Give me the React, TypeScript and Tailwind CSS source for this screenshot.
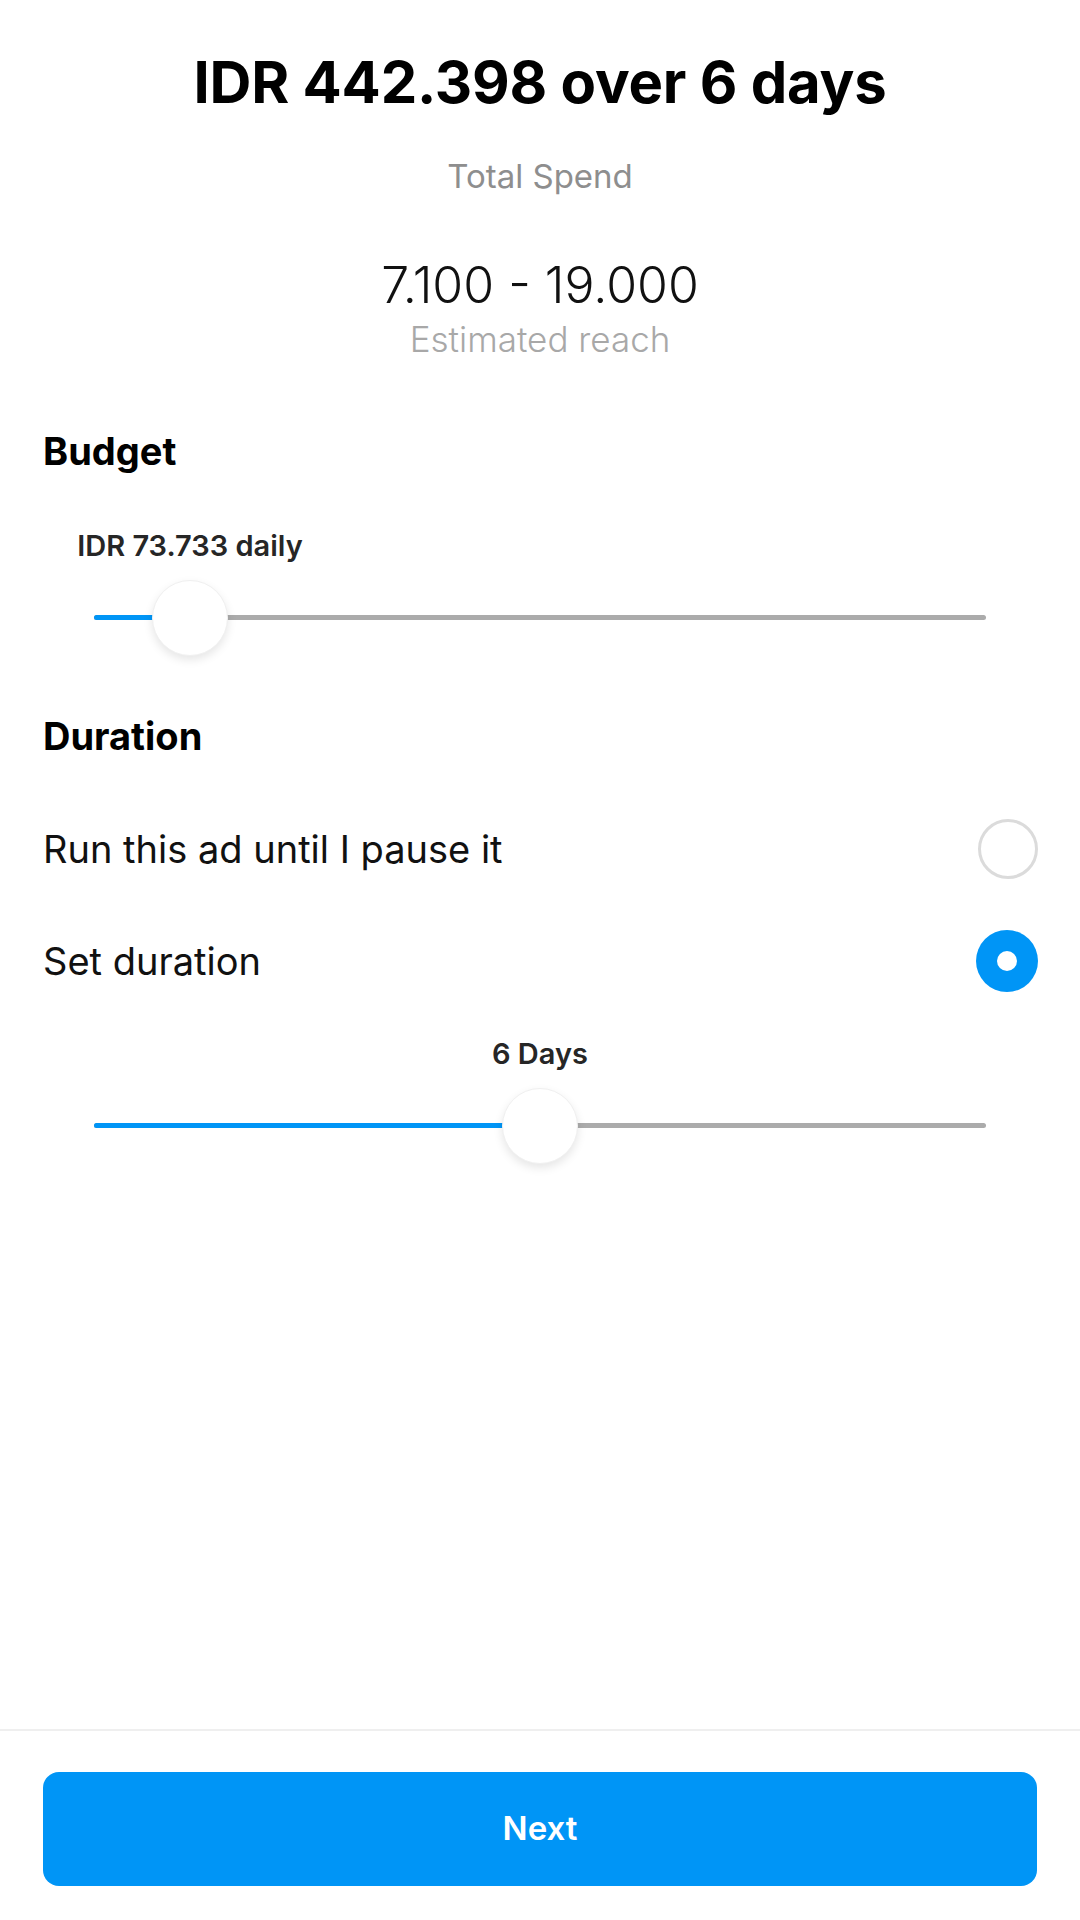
import React from "react";

function Slider({ pct, label }: { pct: number; label: string }) {
  return (
    <div className="px-[94px]">
      <div className="relative h-[32px]">
        <div
          className="absolute top-0 -translate-x-1/2 whitespace-nowrap text-[29px] leading-[32px] font-semibold text-[#262626]"
          style={{ left: `${pct * 100}%` }}
        >
          {label}
        </div>
      </div>
      <div className="relative mt-[17px] h-[78px]">
        <div className="absolute left-0 right-0 top-[36px] h-[5px] rounded-full bg-[#ababab]" />
        <div
          className="absolute left-0 top-[36px] h-[5px] rounded-full bg-[#0095f6]"
          style={{ width: `${pct * 100}%` }}
        />
        <div
          className="absolute top-[1px] h-[76px] w-[76px] -translate-x-1/2 rounded-full border border-[#f0f0f0] bg-white shadow-[0_4px_10px_rgba(0,0,0,0.10)]"
          style={{ left: `${pct * 100}%` }}
        />
      </div>
    </div>
  );
}

export default function App() {
  return (
    <div
      className="flex min-h-[1920px] w-[1080px] flex-col bg-white text-black"
      style={{ fontFamily: "Inter, 'Noto Sans', sans-serif" }}
    >
      <div className="flex flex-1 flex-col">
        <div className="flex flex-col items-center pt-[47px]">
          <h1 className="text-[58px] leading-[70px] font-bold tracking-[-0.2px]">
            IDR 442.398 over 6 days
          </h1>
          <div className="mt-[40px] text-[33px] leading-[38px] text-[#8e8e8e]">Total Spend</div>
          <div className="mt-[64px] text-[50px] leading-[52px] font-light text-[#111]">
            7.100 - 19.000
          </div>
          <div className="mt-[8px] text-[35px] leading-[40px] font-light text-[#a8a8a8]">
            Estimated reach
          </div>
        </div>

        <div className="mt-[72px] px-[43px] text-[38px] leading-[40px] font-bold">Budget</div>
        <div className="mt-[59px]">
          <Slider pct={0.1076} label="IDR 73.733 daily" />
        </div>

        <div className="mt-[59px] px-[43px] text-[38px] leading-[40px] font-bold">Duration</div>

        <div className="mt-[62px] flex h-[62px] items-center justify-between pl-[43px] pr-[42px]">
          <span className="text-[38px] text-[#111]">Run this ad until I pause it</span>
          <div className="h-[60px] w-[60px] rounded-full border-[3px] border-[#dbdbdb]" />
        </div>
        <div className="mt-[50px] flex h-[62px] items-center justify-between pl-[43px] pr-[42px]">
          <span className="text-[38px] text-[#111]">Set duration</span>
          <div className="flex h-[62px] w-[62px] items-center justify-center rounded-full bg-[#0095f6]">
            <div className="h-[20px] w-[20px] rounded-full bg-white" />
          </div>
        </div>

        <div className="mt-[46px]">
          <Slider pct={0.5} label="6 Days" />
        </div>
      </div>

      <div className="border-t-2 border-[#efefef] px-[43px] pt-[41px] pb-[34px]">
        <button className="flex h-[114px] w-full items-center justify-center rounded-[16px] bg-[#0095f6] text-[33px] font-semibold text-white">
          Next
        </button>
      </div>
    </div>
  );
}
